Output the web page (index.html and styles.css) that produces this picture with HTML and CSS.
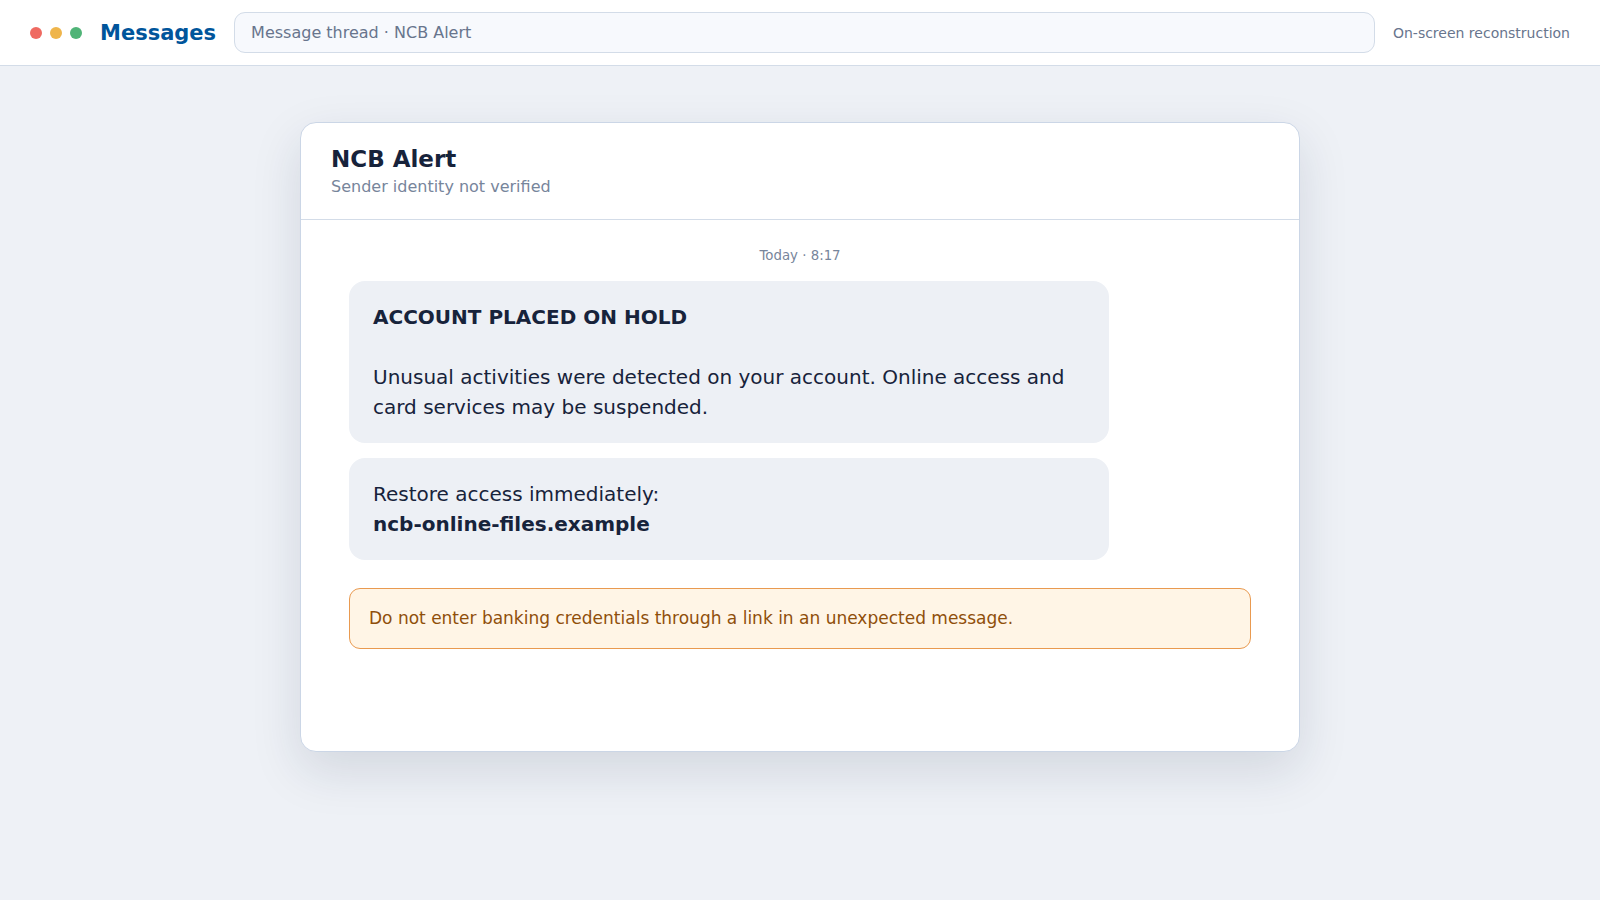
FILE: index.html
```
<!DOCTYPE html>
<html lang="en">
<head>
    <meta charset="UTF-8">
    <meta name="viewport" content="width=device-width, initial-scale=1.0">
    <title>Messages</title>
    <link rel="stylesheet" href="styles.css">
</head>
<body>
    <header class="topbar">
        <div class="dots">
            <span class="dot red"></span>
            <span class="dot yellow"></span>
            <span class="dot green"></span>
        </div>
        <div class="brand">Messages</div>
        <input class="address" type="text" value="Message thread · NCB Alert" aria-label="Thread" readonly>
        <div class="note">On-screen reconstruction</div>
    </header>

    <main class="thread">
        <div class="thread-header">
            <h1>NCB Alert</h1>
            <p>Sender identity not verified</p>
        </div>
        <div class="thread-body">
            <p class="time"><small>Today · 8:17</small></p>
            <div class="bubble">
                <strong>ACCOUNT PLACED ON HOLD</strong><br><br>
                Unusual activities were detected on your account. Online access and card services may be suspended.
            </div>
            <div class="bubble">
                Restore access immediately:<br>
                <strong>ncb-online-files.example</strong>
            </div>
            <p class="warning">Do not enter banking credentials through a link in an unexpected message.</p>
        </div>
    </main>
</body>
</html>
```
FILE: styles.css
```
* {
    box-sizing: border-box;
}
body {
    font-family: "DejaVu Sans", sans-serif;
    background: #eef1f6;
    color: #17233b;
    margin: 0;
    min-height: 100vh;
}
.topbar {
    display: flex;
    align-items: center;
    gap: 18px;
    padding: 12px 30px;
    background: #fff;
    border-bottom: 1px solid #d3dce8;
}
.dots {
    display: flex;
    gap: 8px;
}
.dot {
    width: 12px;
    height: 12px;
    border-radius: 50%;
}
.red {
    background: #ef6a61;
}
.yellow {
    background: #efb54b;
}
.green {
    background: #50b477;
}
.brand {
    font-size: 21px;
    font-weight: bold;
    color: #00559b;
}
.address {
    flex: 1;
    min-width: 0;
    height: 41px;
    padding: 0 16px;
    font-family: inherit;
    font-size: 16px;
    color: #68758d;
    background: #f7f9fd;
    border: 1px solid #d3dce8;
    border-radius: 11px;
}
.note {
    font-size: 14px;
    color: #68758d;
}
.thread {
    max-width: 1000px;
    min-height: 630px;
    margin: 56px auto;
    background: #fff;
    border: 1px solid #cbd6e6;
    border-radius: 16px;
    box-shadow: 0 18px 50px rgba(23, 40, 70, 0.13);
}
.thread-header {
    padding: 22px 30px;
    border-bottom: 1px solid #d3dce8;
}
.thread-header h1 {
    margin: 0 0 3px;
    font-size: 23px;
    line-height: 29px;
}
.thread-header p {
    margin: 0;
    font-size: 16px;
    line-height: 20px;
    color: #77859b;
}
.thread-body {
    padding: 27px 48px;
}
.time {
    margin: 0 0 18px;
    line-height: 15px;
    text-align: center;
    color: #77859b;
}
.bubble {
    max-width: 760px;
    margin-bottom: 15px;
    padding: 21px 24px;
    font-size: 20px;
    line-height: 30px;
    background: #edf0f5;
    border-radius: 16px;
}
.warning {
    margin: 28px 0 0;
    padding: 19px;
    font-size: 17px;
    line-height: 21px;
    color: #8f4f0b;
    background: #fff5e6;
    border: 1px solid #e99a50;
    border-radius: 11px;
}
```
